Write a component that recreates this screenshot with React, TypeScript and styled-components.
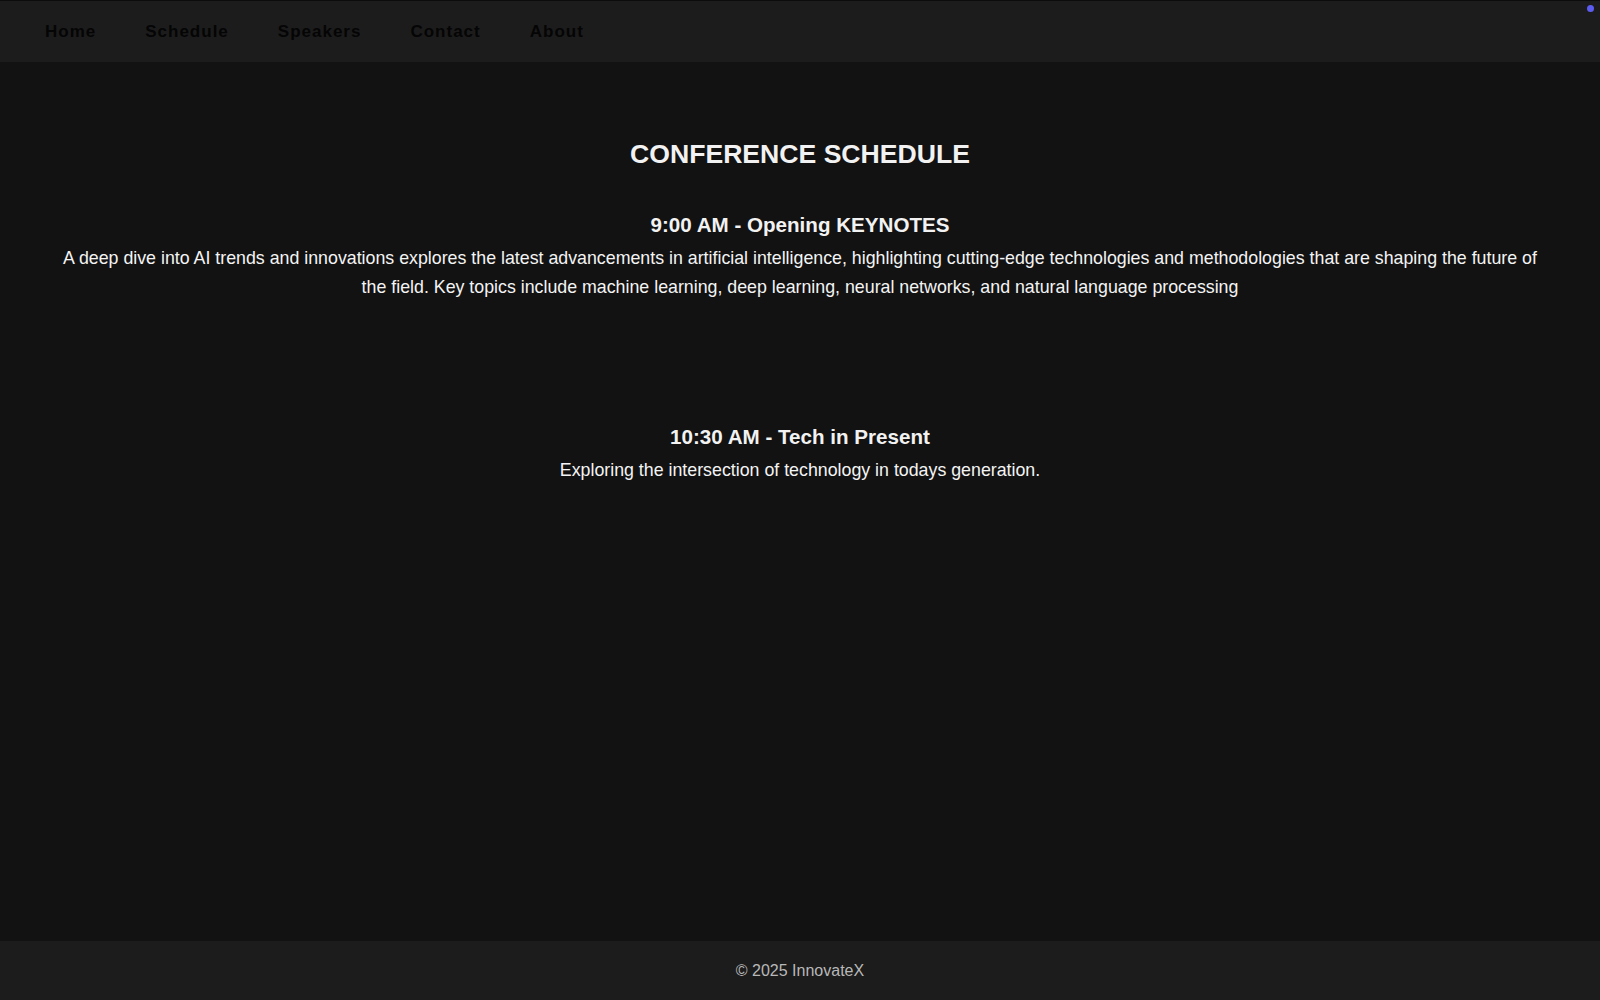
import React from "react";
import styled, { createGlobalStyle } from "styled-components";

const Global = createGlobalStyle`
  html, body { margin: 0; padding: 0; background: #121212; }
  body { font-family: "Liberation Sans", Arial, Helvetica, sans-serif; color: #f2f2f2; }
  #root { min-height: 100vh; display: flex; flex-direction: column; }
`;

const NavBar = styled.nav`
  height: 62px;
  box-sizing: border-box;
  border-top: 1px solid #0c0c0c;
  background: #1c1c1c;
  display: flex;
  align-items: center;
  gap: 49px;
  padding-left: 45px;
`;

const NavLink = styled.a`
  font-size: 17px;
  font-weight: 700;
  letter-spacing: 1px;
  color: #050505;
  text-decoration: none;
  cursor: pointer;
`;

const Dot = styled.span`
  position: fixed;
  top: 5px;
  right: 6px;
  width: 7px;
  height: 7px;
  border-radius: 50%;
  background: #5c5cf0;
`;

const Main = styled.main`
  flex: 1;
  padding: 77px 60px 0;
  text-align: center;
`;

const Title = styled.h1`
  margin: 0 0 44px;
  font-size: 26.6px;
  line-height: 30px;
  font-weight: 700;
  color: #f2f2f2;
`;

const Session = styled.section<{ $gap: number }>`
  margin-bottom: ${(p) => p.$gap}px;
`;

const SessionTitle = styled.h2`
  margin: 0 0 7px;
  font-size: 20.6px;
  line-height: 24px;
  font-weight: 700;
  color: #f2f2f2;
`;

const SessionText = styled.p`
  margin: 0;
  font-size: 17.8px;
  line-height: 28.6px;
  color: #f4f4f4;
`;

const Footer = styled.footer`
  height: 59px;
  background: #1c1c1c;
  display: flex;
  align-items: center;
  justify-content: center;
  font-size: 16px;
  color: #b8b8b8;
`;

const links = ["Home", "Schedule", "Speakers", "Contact", "About"];

export default function App() {
  return (
    <>
      <Global />
      <NavBar>
        {links.map((l) => (
          <NavLink key={l}>{l}</NavLink>
        ))}
      </NavBar>
      <Dot />
      <Main>
        <Title>CONFERENCE SCHEDULE</Title>
        <Session $gap={124}>
          <SessionTitle>9:00 AM - Opening KEYNOTES</SessionTitle>
          <SessionText>
            A deep dive into AI trends and innovations explores the latest advancements in artificial
            intelligence, highlighting cutting-edge technologies and methodologies that are shaping the
            future of the field. Key topics include machine learning, deep learning, neural networks, and
            natural language processing
          </SessionText>
        </Session>
        <Session $gap={0}>
          <SessionTitle>10:30 AM - Tech in Present</SessionTitle>
          <SessionText>Exploring the intersection of technology in todays generation.</SessionText>
        </Session>
      </Main>
      <Footer>© 2025 InnovateX</Footer>
    </>
  );
}
